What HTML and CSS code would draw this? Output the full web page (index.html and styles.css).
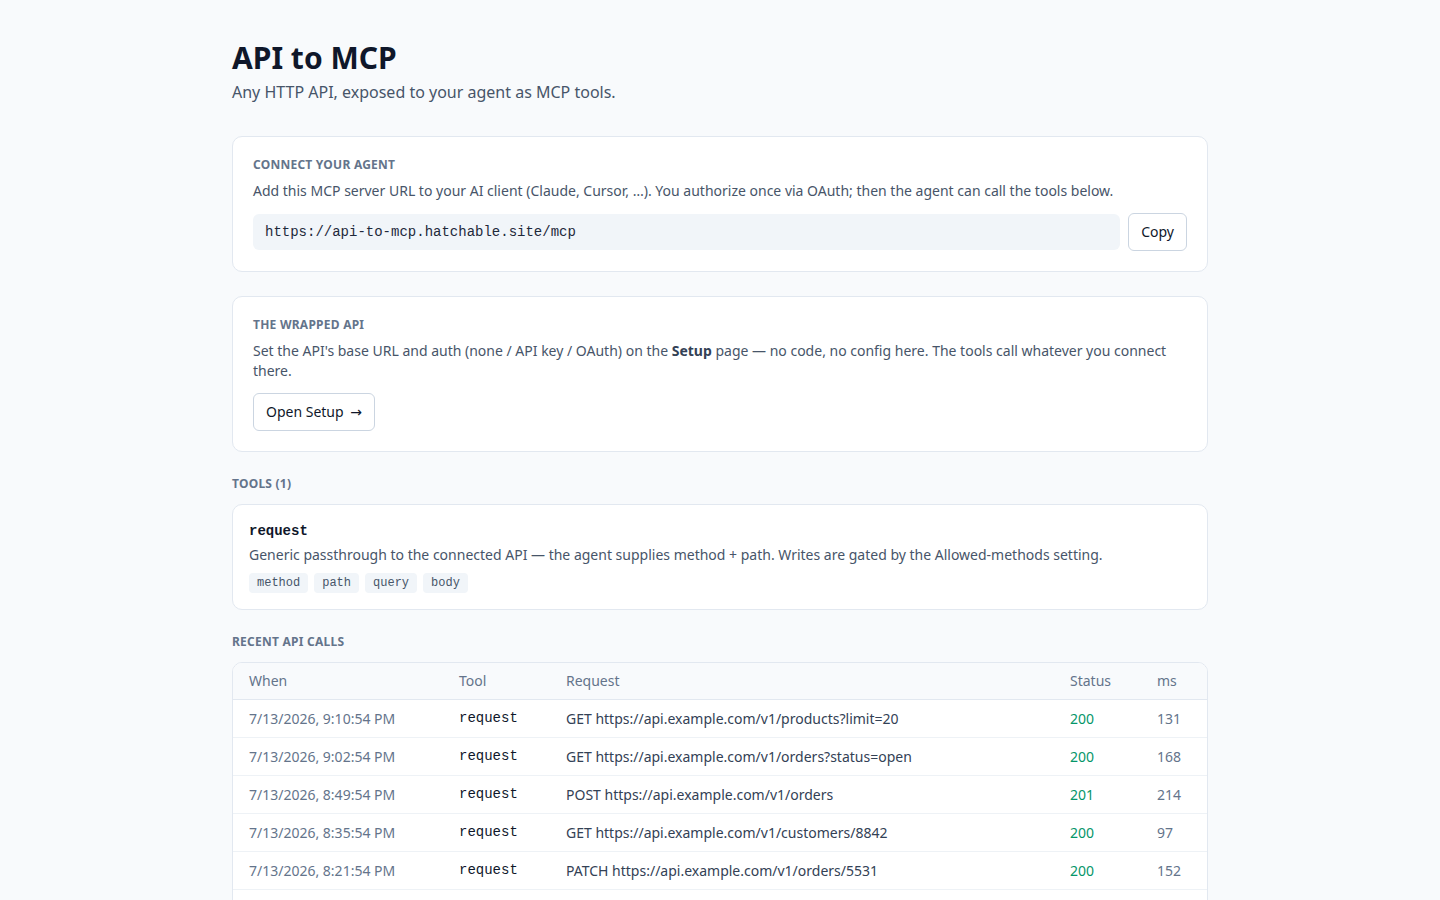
FILE: index.html
```html
<!DOCTYPE html>
<html lang="en">
<head>
<meta charset="utf-8">
<title>API to MCP</title>
<link rel="stylesheet" href="styles.css">
</head>
<body>
<main class="page">
  <header class="intro">
    <h1 class="title">API to MCP</h1>
    <p class="subtitle">Any HTTP API, exposed to your agent as MCP tools.</p>
  </header>

  <section class="card card-lg">
    <div class="label">Connect your agent</div>
    <p class="text">Add this MCP server URL to your AI client (Claude, Cursor, …). You authorize once via OAuth; then the agent can call the tools below.</p>
    <div class="url-row">
      <code class="url-box">https://api-to-mcp.hatchable.site/mcp</code>
      <button class="btn" type="button">Copy</button>
    </div>
  </section>

  <section class="card card-lg">
    <div class="label">The wrapped API</div>
    <p class="text">Set the API's base URL and auth (none / API key / OAuth) on the <strong>Setup</strong> page — no code, no config here. The tools call whatever you connect there.</p>
    <div class="actions">
      <button class="btn" type="button">Open Setup <span class="arrow">→</span></button>
    </div>
  </section>

  <div class="label section-label">Tools (1)</div>
  <section class="card card-sm">
    <div class="tool-name">request</div>
    <p class="text tool-desc">Generic passthrough to the connected API — the agent supplies method + path. Writes are gated by the Allowed-methods setting.</p>
    <div class="chips">
      <span class="chip">method</span>
      <span class="chip">path</span>
      <span class="chip">query</span>
      <span class="chip">body</span>
    </div>
  </section>

  <div class="label section-label">Recent API calls</div>
  <section class="card table-card">
    <table class="calls">
      <colgroup>
        <col class="c-when"><col class="c-tool"><col class="c-req"><col class="c-status"><col class="c-ms">
      </colgroup>
      <thead>
        <tr><th>When</th><th>Tool</th><th>Request</th><th>Status</th><th>ms</th></tr>
      </thead>
      <tbody>
        <tr><td class="muted">7/13/2026, 9:10:54 PM</td><td class="mono">request</td><td class="req">GET https://api.example.com/v1/products?limit=20</td><td class="ok">200</td><td class="muted">131</td></tr>
        <tr><td class="muted">7/13/2026, 9:02:54 PM</td><td class="mono">request</td><td class="req">GET https://api.example.com/v1/orders?status=open</td><td class="ok">200</td><td class="muted">168</td></tr>
        <tr><td class="muted">7/13/2026, 8:49:54 PM</td><td class="mono">request</td><td class="req">POST https://api.example.com/v1/orders</td><td class="ok">201</td><td class="muted">214</td></tr>
        <tr><td class="muted">7/13/2026, 8:35:54 PM</td><td class="mono">request</td><td class="req">GET https://api.example.com/v1/customers/8842</td><td class="ok">200</td><td class="muted">97</td></tr>
        <tr><td class="muted">7/13/2026, 8:21:54 PM</td><td class="mono">request</td><td class="req">PATCH https://api.example.com/v1/orders/5531</td><td class="ok">200</td><td class="muted">152</td></tr>
        <tr><td class="muted">7/13/2026, 8:07:54 PM</td><td class="mono">request</td><td class="req">GET https://api.example.com/v1/products/112</td><td class="ok">200</td><td class="muted">88</td></tr>
      </tbody>
    </table>
  </section>
</main>
</body>
</html>
```

FILE: styles.css
```css
* { box-sizing: border-box; }

html, body {
  margin: 0;
  padding: 0;
  background: #f8fafc;
}

body {
  font-family: "Noto Sans", "Open Sans", sans-serif;
  font-size: 14px;
  line-height: 20px;
  color: #334155;
}

.page {
  max-width: 1024px;
  margin: 0 auto;
  padding: 40px 24px 40px;
}

.intro { margin-bottom: 32px; }

.title {
  margin: 0;
  font-size: 30px;
  line-height: 36px;
  font-weight: 700;
  color: #0f172a;
}

.subtitle {
  margin: 4px 0 0;
  font-size: 16px;
  line-height: 24px;
  color: #475569;
}

.card {
  background: #ffffff;
  border: 1px solid #e2e8f0;
  border-radius: 10px;
}

.card-lg {
  padding: 20px;
  margin-bottom: 24px;
}

.card-sm {
  padding: 16px;
  margin-bottom: 24px;
}

.label {
  font-size: 12px;
  line-height: 16px;
  font-weight: 700;
  text-transform: uppercase;
  letter-spacing: 0.02em;
  color: #64748b;
}

.section-label { margin-bottom: 12px; }

.text {
  margin: 8px 0 0;
  color: #475569;
}

.text strong { color: #334155; font-weight: 700; }

.url-row {
  display: flex;
  align-items: center;
  gap: 8px;
  margin-top: 12px;
}

.url-box {
  flex: 1;
  display: block;
  background: #f1f5f9;
  border-radius: 6px;
  padding: 8px 12px;
  font-family: "Liberation Mono", monospace;
  font-size: 14px;
  line-height: 20px;
  color: #1e293b;
}

.btn {
  font-family: "Noto Sans", sans-serif;
  font-size: 14px;
  line-height: 20px;
  padding: 8px 12px;
  background: #ffffff;
  border: 1px solid #cbd5e1;
  border-radius: 6px;
  color: #0f172a;
  cursor: pointer;
}

.arrow {
  display: inline-block;
  font-family: "DejaVu Sans", sans-serif;
  font-size: 14px;
  line-height: 1;
  margin-left: 3px;
}

.actions {
  display: flex;
  margin-top: 12px;
}

.tool-name {
  font-family: "Liberation Mono", monospace;
  font-weight: 700;
  font-size: 14px;
  line-height: 20px;
  color: #0f172a;
}

.tool-desc { margin-top: 4px; }

.chips {
  display: flex;
  gap: 6px;
  margin-top: 8px;
}

.chip {
  font-family: "Liberation Mono", monospace;
  font-size: 12px;
  line-height: 16px;
  padding: 2px 8px;
  background: #f1f5f9;
  border-radius: 4px;
  color: #475569;
}

.table-card { overflow: hidden; }

.calls {
  width: 100%;
  border-collapse: collapse;
  table-layout: fixed;
}

.c-when { width: 210px; }
.c-tool { width: 107px; }
.c-req { width: 504px; }
.c-status { width: 87px; }
.c-ms { width: 66px; }

.calls th {
  text-align: left;
  font-weight: 400;
  color: #64748b;
  background: #f8fafc;
  padding: 8px 16px;
  line-height: 20px;
  border-bottom: 1px solid #e2e8f0;
}

.calls td {
  padding: 8px 16px;
  line-height: 21px;
  border-bottom: 1px solid #eef2f6;
  white-space: nowrap;
}

.calls .muted { color: #64748b; }
.calls .req { color: #334155; }
.calls .ok { color: #059669; }

.calls .mono {
  font-family: "Liberation Mono", monospace;
  color: #0f172a;
}
```
